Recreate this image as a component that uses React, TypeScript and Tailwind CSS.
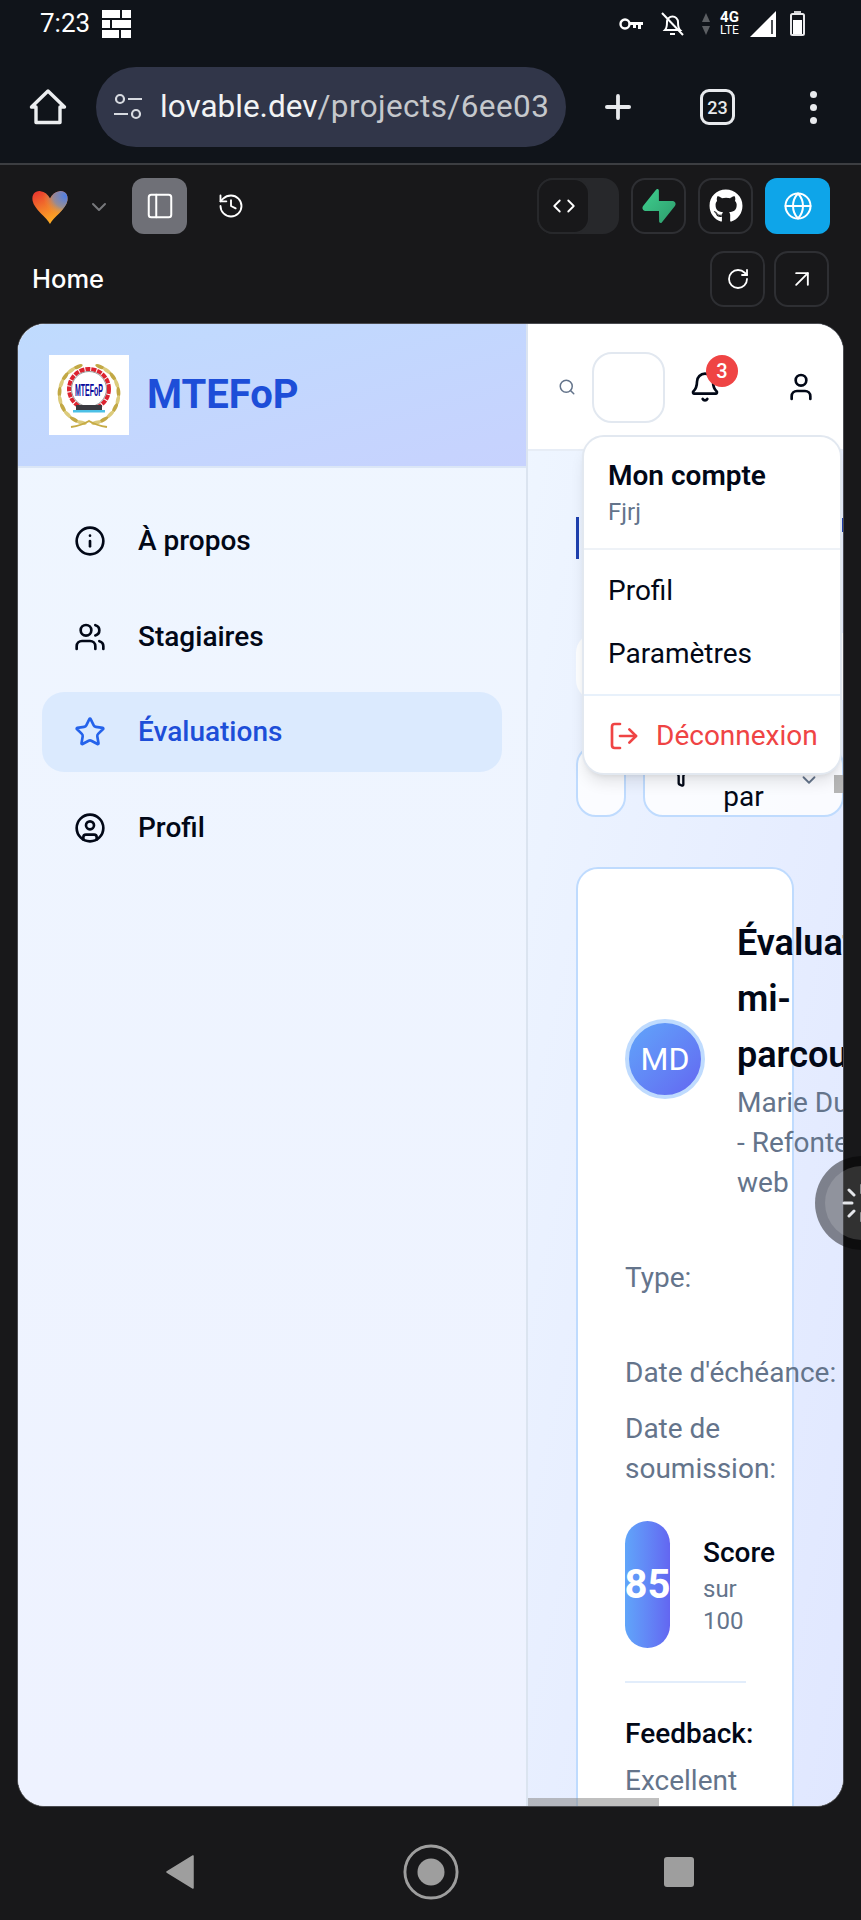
import React from "react";
import { Info, Users, Star, CircleUser, Bell, User, Search, Plus, PanelLeft, History, Globe, RotateCw, ArrowUpRight, ChevronDown, ChevronLeft, ChevronRight, Filter } from "lucide-react";
import { FaGithub } from "react-icons/fa";

function StatusIcons() {
  return (
    <div className="flex items-center">
      <svg width="25" height="14" viewBox="0 0 25 14" className="mr-[16px]"><circle cx="6" cy="7" r="4.500" fill="none" stroke="#fff" strokeWidth="2.400" /><path d="M10 5h14v3h-2v4h-3V8h-2v3h-3V8h-4z" fill="#fff" /></svg>
      <svg width="25" height="26" viewBox="0 0 25 26" className="mr-[17px]" fill="none" stroke="#fff" strokeWidth="2"><path d="M5 19c2-2 2-4 2-8a5.500 5.500 0 0 1 11 0c0 4 0 6 2 8z" /><path d="M2 2l21 22" /><path d="M10 23h5" /></svg>
      <svg width="8" height="24" viewBox="0 0 8 24" className="mr-[8px]"><path d="M4 1l4 9H0z" fill="#5c5f63" /><path d="M4 23l4-9H0z" fill="#5c5f63" /></svg>
      <div className="flex flex-col items-center mr-[9px] w-[23px] font-['Roboto',sans-serif] text-white leading-none">
        <span className="text-[15px] font-bold leading-[13px]">4G</span>
        <span className="text-[12px] leading-[12px]">LTE</span>
      </div>
      <svg width="26" height="26" viewBox="0 0 26 26" className="mr-[14px]"><path d="M26 0v26H0z" fill="#fff" /><path d="M22 9v14" stroke="#10141a" strokeWidth="1.500" /></svg>
      <svg width="15" height="25" viewBox="0 0 15 25"><rect x="4" y="0" width="7" height="3" fill="#cfd0d2" /><rect x="1" y="3" width="13" height="21" rx="1.500" fill="none" stroke="#e8e8ea" strokeWidth="2" /><rect x="3" y="9" width="9" height="14" fill="#fff" /></svg>
    </div>
  );
}

function Bricks() {
  return (
    <svg width="29" height="28" viewBox="0 0 29 28" fill="#fff">
      <rect x="0" y="0" width="18" height="8" /><rect x="20" y="0" width="9" height="8" />
      <rect x="0" y="10" width="8" height="8" /><rect x="10" y="10" width="19" height="8" />
      <rect x="0" y="20" width="17" height="8" /><rect x="19" y="20" width="10" height="8" />
    </svg>
  );
}

function Heart() {
  const d = "M18 32C15 26 3 18 1.500 10 .5 4 4 .5 9 1c4 .5 7 3 9 7 2-4 5-6.500 9-7 5-.5 8.500 3 7.500 9-1.500 8-13.500 16-16.500 22z";
  return (
    <svg width="38" height="34" viewBox="0 0 36 32" className="-ml-[1px] -mt-[1px]">
      <defs>
        <linearGradient id="ha" x1="0" y1="0" x2="0.5" y2="1"><stop offset="0" stopColor="#e8302f" /><stop offset="0.55" stopColor="#f37a2a" /><stop offset="1" stopColor="#fdae24" /></linearGradient>
        <radialGradient id="hb" cx="0.95" cy="0.15" r="0.65"><stop offset="0" stopColor="#4f7fe8" /><stop offset="0.55" stopColor="#7f8fb0" stopOpacity="0.8" /><stop offset="1" stopColor="#f59e2c" stopOpacity="0" /></radialGradient>
      </defs>
      <path d={d} fill="url(#ha)" />
      <path d={d} fill="url(#hb)" />
    </svg>
  );
}

function Logo() {
  const leaves = [0, 1, 2, 3, 4, 5, 6, 7, 8, 9];
  const leaf = (sign: number, i: number) => {
    const deg = 112 + i * 16;
    const a = (deg * Math.PI) / 180;
    const r = 29.5;
    const x = 40 + sign * r * Math.cos(a);
    const y = 39 - r * Math.sin(a);
    const rot = sign * -deg;
    return <ellipse key={`${sign}-${i}`} cx={x} cy={y} rx="1.900" ry="5" fill={i % 2 ? "#dccb7c" : "#c2a845"} transform={`rotate(${rot} ${x} ${y})`} />;
  };
  return (
    <svg width="80" height="80" viewBox="0 0 80 80" className="bg-white shrink-0">
      {leaves.map((i) => leaf(1, i))}
      {leaves.map((i) => leaf(-1, i))}
      <path d="M22 72c7-1 13-3 18-6 5 3 11 5 18 6" fill="none" stroke="#c6ab45" strokeWidth="2" />
      <circle cx="40" cy="34" r="20" fill="none" stroke="#dc2430" strokeWidth="4" strokeDasharray="5 1" />
      <circle cx="40" cy="34" r="17.500" fill="#fff" stroke="#333" strokeWidth="0.500" />
      <text x="40" y="41" textAnchor="middle" fontFamily="Liberation Sans" fontWeight="700" fontSize="17" fill="#0a0a9c" textLength="28" lengthAdjust="spacingAndGlyphs">MTEFoP</text>
      <rect x="27" y="50" width="26" height="5" fill="#3a3a40" />
      <rect x="24" y="55" width="32" height="2.500" fill="#4cc0e6" />
    </svg>
  );
}

function Item({ icon, label, active }: { icon: React.ReactNode; label: string; active?: boolean }) {
  return (
    <div className={`h-[80px] rounded-[22px] flex items-center pl-[32px] gap-[32px] text-[28px] font-medium ${active ? "bg-[#dbeafe] text-[#1d4ed8]" : "text-[#020817]"}`}>
      <span className={active ? "text-[#2563eb]" : ""}>{icon}</span>
      {label}
    </div>
  );
}

function TopBtn({ children, className = "" }: { children: React.ReactNode; className?: string }) {
  return <div className={`w-[55px] h-[56px] rounded-[14px] border-2 border-[#2e2f33] flex items-center justify-center text-white ${className}`}>{children}</div>;
}

export default function App() {
  return (
    <div className="relative w-[861px] h-[1920px] overflow-hidden bg-[#18181a] font-['Roboto',sans-serif]">
      {/* status bar */}
      <div className="h-[47px] bg-[#10141a] flex items-center justify-between pl-[40px] pr-[56px] text-white">
        <div className="flex items-center gap-[12px] text-[26px]">
          7:23
          <Bricks />
        </div>
        <StatusIcons />
      </div>
      {/* browser toolbar */}
      <div className="h-[118px] pt-[4px] bg-[#10141a] flex items-center border-b-2 border-[#3c3e42]">
        <div className="w-[96px] flex justify-center">
          <svg width="38" height="38" viewBox="0 0 38 38" fill="none" stroke="#eceef0" strokeWidth="3.400" strokeLinejoin="round"><path d="M19 3L2.500 19H7v15.500h24V19h4.500z" /></svg>
        </div>
        <div className="w-[470px] h-[80px] rounded-full bg-[#313649] flex items-center pl-[17px] pr-[16px] overflow-hidden">
          <svg width="30" height="30" viewBox="0 0 30 30" fill="none" stroke="#d7dae0" strokeWidth="2.200" className="shrink-0 mr-[17px]"><circle cx="7" cy="7" r="4" /><path d="M15 7h14" /><path d="M1 22h14" /><circle cx="23" cy="22" r="4" /></svg>
          <div className="text-[31.500px] whitespace-nowrap overflow-hidden w-[391px] text-[#c5c8cc]"><span className="text-[#f1f3f4]">lovable.dev</span><span className="tracking-[0.4px]">/projects/6ee032</span></div>
        </div>
        <div className="w-[104px] flex justify-center"><Plus size={38} strokeWidth={2.400} className="text-[#e8eaed]" /></div>
        <div className="ml-[30px] w-[35px] h-[36px] rounded-[9px] border-[3px] border-[#e8eaed] flex items-center justify-center text-[18px] font-medium text-[#e8eaed]">23</div>
        <div className="flex-1 flex justify-center pl-[30px]">
          <div className="flex flex-col gap-[6px]">
            <div className="w-[7px] h-[7px] rounded-full bg-[#e8eaed]" />
            <div className="w-[7px] h-[7px] rounded-full bg-[#e8eaed]" />
            <div className="w-[7px] h-[7px] rounded-full bg-[#e8eaed]" />
          </div>
        </div>
      </div>
      {/* lovable toolbar */}
      <div className="h-[71px] pt-[13px] flex items-start pl-[32px] pr-[31px] font-['Inter',sans-serif]">
        <div className="mt-[13px] w-[36px]"><Heart /></div>
        <ChevronDown size={24} className="text-[#77787c] ml-[19px] mt-[17px]" strokeWidth={2} />
        <div className="ml-[21px] w-[55px] h-[56px] rounded-[12px] bg-[#6f7077] flex items-center justify-center text-white"><PanelLeft size={30} strokeWidth={1.600} /></div>
        <History size={28} strokeWidth={1.600} className="text-white ml-[30px] mt-[14px]" />
        <div className="flex-1" />
        <div className="w-[82px] h-[56px] rounded-[16px] bg-[#27282b] flex">
          <div className="w-[53px] h-[56px] rounded-[16px] bg-[#18181a] border-2 border-[#27282b] flex items-center justify-center text-white"><ChevronLeft size={22} className="-mr-[4px]" /><ChevronRight size={22} className="-ml-[4px]" /></div>
        </div>
        <TopBtn className="ml-[12px]">
          <svg width="34" height="34" viewBox="0 0 24 24"><defs><linearGradient id="sb" x1="0" y1="0" x2="1" y2="1"><stop offset="0" stopColor="#3ecf8e" /><stop offset="1" stopColor="#2e9c6c" /></linearGradient></defs><path d="M11.900 1.036c-.015-.986-1.260-1.410-1.874-.637L.764 12.050C-.330 13.427.650 15.455 2.409 15.455h9.579l.113 7.510c.014.985 1.259 1.408 1.873.636l9.262-11.653c1.093-1.375.113-3.403-1.645-3.403h-9.642z" fill="url(#sb)" /></svg>
        </TopBtn>
        <TopBtn className="ml-[12px]"><FaGithub size={34} /></TopBtn>
        <div className="ml-[12px] w-[65px] h-[56px] rounded-[12px] bg-[#0ea5e9] flex items-center justify-center text-white"><Globe size={30} strokeWidth={1.600} /></div>
      </div>
      <div className="h-[87px] pt-[15px] flex items-start pl-[32px] pr-[32px] font-['Inter',sans-serif]">
        <div className="text-[25.500px] font-medium text-white mt-[10px] leading-[36px]">Home</div>
        <div className="flex-1" />
        <TopBtn><RotateCw size={24} strokeWidth={1.800} /></TopBtn>
        <TopBtn className="ml-[9px]"><ArrowUpRight size={28} strokeWidth={1.600} /></TopBtn>
      </div>
      {/* preview */}
      <div className="relative mx-[17px] w-[827px] h-[1484px] rounded-[28px] overflow-hidden flex border border-[#4a4b50] bg-white">
        <aside className="w-[510px] shrink-0 h-full bg-gradient-to-b from-[#eff6ff] to-[#eef2ff] border-r-2 border-[#dbe4f0]">
          <div className="h-[144px] bg-gradient-to-br from-[#bfdbfe] to-[#c7d2fe] border-b-2 border-[#dbe6f6] flex items-center pl-[31px] gap-[18px]">
            <Logo />
            <div className="text-[40px] font-bold text-[#1d4ed8]">MTEFoP</div>
          </div>
          <nav className="pt-[33px] px-[24px] pr-[24px] flex flex-col gap-[15.500px]">
            <Item icon={<Info size={32} strokeWidth={2} />} label="À propos" />
            <Item icon={<Users size={32} strokeWidth={2} />} label="Stagiaires" />
            <Item icon={<Star size={32} strokeWidth={2} />} label="Évaluations" active />
            <Item icon={<CircleUser size={32} strokeWidth={2} />} label="Profil" />
          </nav>
        </aside>
        <main className="relative flex-1 h-full overflow-hidden bg-gradient-to-br from-[#eff6ff] to-[#e0e7ff]">
          <header className="h-[127px] bg-white border-b-2 border-[#e7edf6] flex items-start text-[#020817]">
            <Search size={18} strokeWidth={2} className="text-[#64748b] ml-[30px] mt-[54px]" />
            <div className="ml-[16px] mt-[28px] w-[73px] h-[71px] rounded-[20px] border-2 border-[#e2e8f0] bg-white" />
            <Bell size={32} strokeWidth={2} className="ml-[24px] mt-[47px]" />
            <User size={32} strokeWidth={2} className="ml-[64px] mt-[47px]" />
          </header>
          <div className="pl-[48px] pt-[66px]">
            <div className="w-[3px] h-[42px] bg-[#1e40af]" />
            <div className="mt-[74px] w-[300px] h-[67px] rounded-[20px] bg-white/90" />
            <div className="mt-[45px] flex h-[72px] gap-[17px]">
              <div className="w-[50px] shrink-0 rounded-[20px] border-2 border-[#bfdbfe] bg-white/80" />
              <div className="relative w-[201px] shrink-0 rounded-[20px] border-2 border-[#bfdbfe] bg-white/80 pt-[30px] text-center text-[28px] leading-[40px] text-[#020817]">
                <Filter size={28} strokeWidth={2} className="absolute left-[22px] top-[13px]" />
                par
              </div>
            </div>
            <div className="mt-[50px] w-[218px] h-[1100px] rounded-[22px] border-2 border-[#bfdbfe] bg-white pl-[47px] pt-[46px]">
              <div className="w-[500px] flex items-center">
                <div className="w-[80px] h-[80px] rounded-full border-4 border-[#bfdbfe] bg-gradient-to-br from-[#60a5fa] to-[#6366f1] flex items-center justify-center text-white text-[32px] shrink-0">MD</div>
                <div className="ml-[32px]">
                  <div className="text-[36px] font-semibold leading-[56px] text-[#020817]">Évaluation de<br />mi-<br />parcours</div>
                  <div className="text-[28px] leading-[40px] text-[#64748b]">Marie Dupont<br />- Refonte du site<br />web</div>
                </div>
              </div>
              <div className="mt-[55px] text-[28px] leading-[40px] text-[#64748b] whitespace-nowrap">
                <div className="h-[95px]">Type:</div>
                <div className="h-[56px]">Date d'échéance:</div>
                <div>Date de<br />soumission:</div>
              </div>
              <div className="mt-[32px] flex items-center">
                <div className="w-[45px] h-[127px] rounded-full bg-gradient-to-r from-[#60a5fa] to-[#6366f1] flex items-center justify-center text-white text-[40px] font-bold">85</div>
                <div className="ml-[33px]">
                  <div className="text-[28px] font-medium leading-[40px] text-[#020817]">Score</div>
                  <div className="text-[24px] leading-[32px] text-[#64748b]">sur<br />100</div>
                </div>
              </div>
              <div className="mt-[33px] w-[121px] h-[2px] bg-[#e2edfb]" />
              <div className="mt-[31px] text-[28px] font-medium leading-[40px] text-[#020817]">Feedback:</div>
              <div className="mt-[7px] text-[28px] leading-[40px] text-[#64748b]">Excellent</div>
            </div>
          </div>
          {/* overlays: scrollbars */}
          <div className="absolute left-0 bottom-0 w-[131px] h-[8px] bg-[#8a8a8a]/55" />
          <div className="absolute right-0 top-[451px] w-[9px] h-[18px] bg-[#b5b5b5]" />
          <div className="absolute right-0 top-[194px] w-[2px] h-[14px] bg-[#1e40af]" />
        </main>
        <ChevronDown size={22} className="absolute left-[780px] top-[445px] text-[#64748b]" />
        {/* badge */}
        <div className="absolute left-[688px] top-[31px] w-[32px] h-[32px] rounded-full bg-[#ef4444] text-white text-[20px] font-medium flex items-center justify-center">3</div>
        {/* account menu */}
        <div className="absolute left-[564px] top-[111px] w-[260px] h-[340px] rounded-[22px] bg-white border-2 border-[#e2e8f0] shadow-lg text-[#020817]">
          <div className="pl-[24px] pt-[20px]">
            <div className="text-[28px] font-semibold leading-[38px]">Mon compte</div>
            <div className="text-[24px] leading-[34px] text-[#64748b]">Fjrj</div>
          </div>
          <div className="mt-[19px] h-[2px] bg-[#eef2f7]" />
          <div className="pl-[24px] pt-[21px] text-[28px] leading-[40px]">Profil</div>
          <div className="pl-[24px] pt-[23px] text-[28px] leading-[40px]">Paramètres</div>
          <div className="mt-[20px] h-[2px] bg-[#e8f1fb]" />
          <div className="pl-[24px] pt-[20px] flex items-center gap-[16px] text-[28px] leading-[40px] text-[#ef4444]">
            <svg width="32" height="32" viewBox="0 0 24 24" fill="none" stroke="#ef4444" strokeWidth="2" strokeLinecap="round" strokeLinejoin="round"><path d="M9 21H5a2 2 0 0 1-2-2V5a2 2 0 0 1 2-2h4" /><path d="M16 17l5-5-5-5" /><path d="M21 12H9" /></svg>
            Déconnexion
          </div>
        </div>
      </div>
      {/* android nav */}
      <div className="h-[113px] pt-[17px] flex items-center">
        <svg width="28" height="34" viewBox="0 0 28 34" className="ml-[166px]"><path d="M27 1v32L1 17z" fill="#9e9e9e" stroke="#9e9e9e" strokeWidth="1.500" strokeLinejoin="round" /></svg>
        <svg width="56" height="56" viewBox="0 0 58 58" className="ml-[209px]"><circle cx="29" cy="29" r="27" fill="none" stroke="#9e9e9e" strokeWidth="3" /><circle cx="29" cy="29" r="14" fill="#9e9e9e" /></svg>
        <div className="ml-[205px] w-[30px] h-[30px] rounded-[3px] bg-[#9e9e9e]" />
      </div>
      {/* floating assistive bubble */}
      <div className="absolute left-[815px] top-[1156px] w-[94px] h-[94px] rounded-full bg-black/45 flex items-center justify-center">
        <div className="w-[74px] h-[74px] rounded-full bg-white/15 flex items-center justify-center">
          <svg width="40" height="40" viewBox="0 0 40 40" stroke="#e5e7eb" strokeWidth="3" strokeLinecap="round"><path d="M20 2v8M20 30v8M2 20h8M30 20h8M7 7l5 5M28 28l5 5M7 33l5-5M28 12l5-5" /></svg>
        </div>
      </div>
    </div>
  );
}
